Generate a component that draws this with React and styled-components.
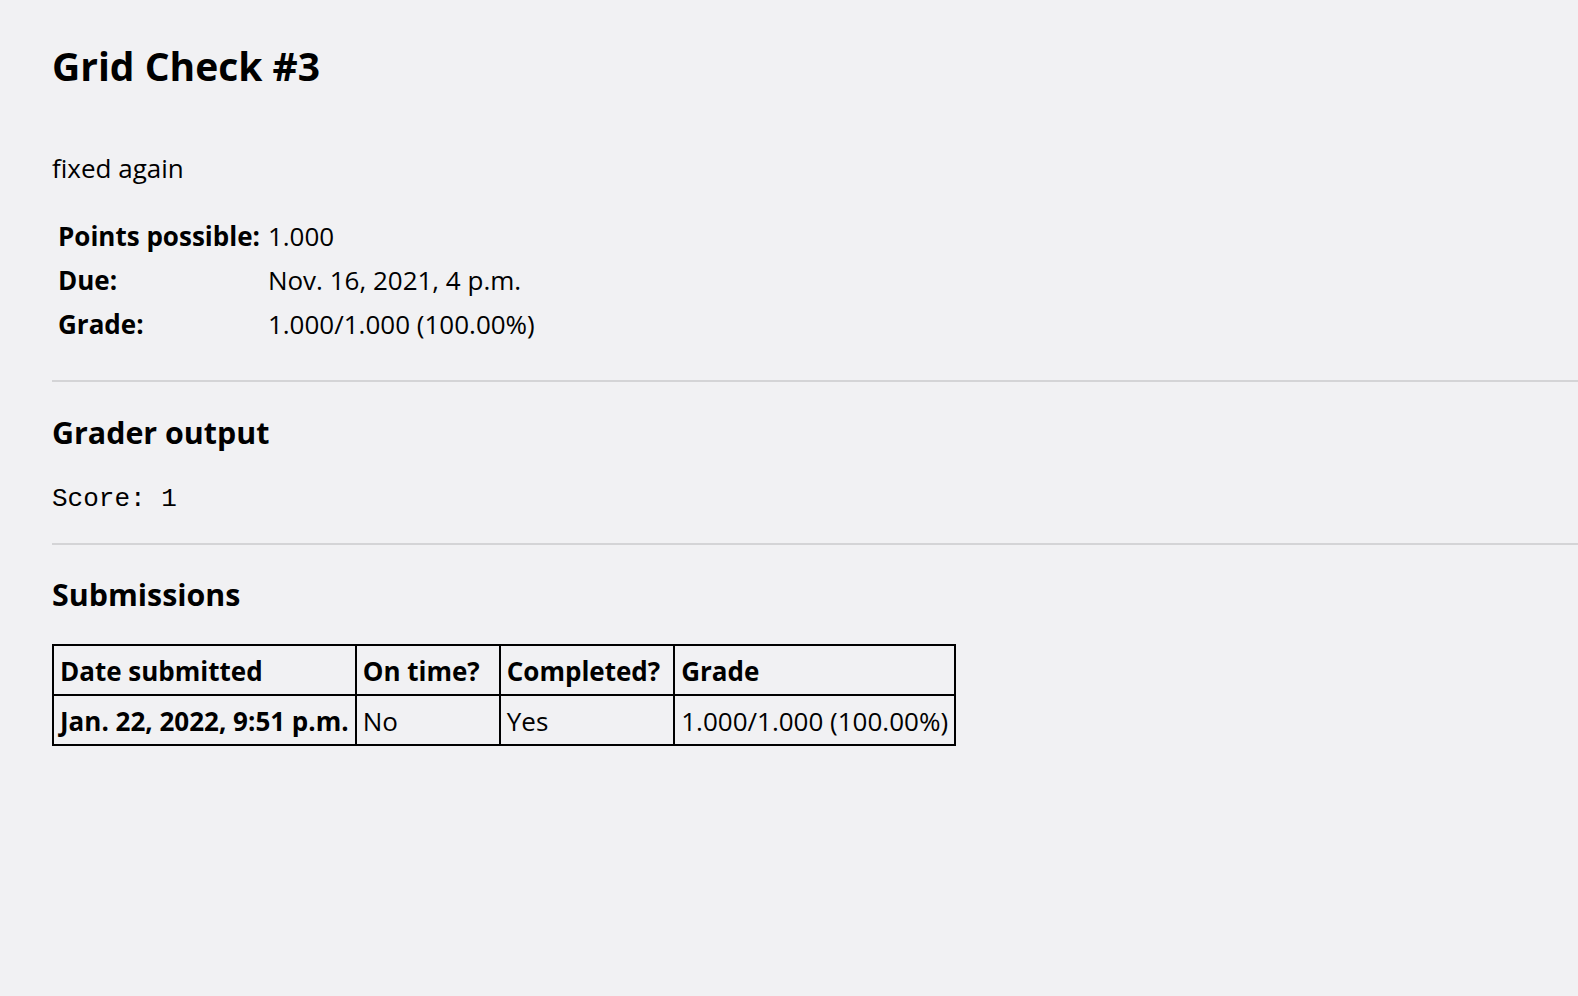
import React from "react";
import styled, { createGlobalStyle } from "styled-components";

const GlobalStyle = createGlobalStyle`
    html, body {
        margin: 0;
        padding: 0;
        background-color: #f1f1f3;
    }
    body {
        font-family: "Open Sans", "Noto Sans", sans-serif;
        color: #000;
        font-size: 26px;
    }
`;

const details = [
    { label: "Points possible:", value: "1.000" },
    { label: "Due:", value: "Nov. 16, 2021, 4 p.m." },
    { label: "Grade:", value: "1.000/1.000 (100.00%)" },
];

function App() {
    return (
        <>
            <GlobalStyle />
            <Page>
                <Title>Grid Check #3</Title>
                <Description>fixed again</Description>
                <InfoTable>
                    <tbody>
                        {details.map((row) => (
                            <tr key={row.label}>
                                <InfoLabel>{row.label}</InfoLabel>
                                <InfoValue>{row.value}</InfoValue>
                            </tr>
                        ))}
                    </tbody>
                </InfoTable>
                <Rule $top={34} />
                <SectionTitle $top={33} $bottom={33}>
                    Grader output
                </SectionTitle>
                <Output>Score: 1</Output>
                <Rule $top={29} />
                <SectionTitle $top={32} $bottom={30}>
                    Submissions
                </SectionTitle>
                <Submissions>
                    <thead>
                        <tr>
                            <HeadCell>Date submitted</HeadCell>
                            <HeadCell $extra={13}>On time?</HeadCell>
                            <HeadCell $extra={7}>Completed?</HeadCell>
                            <HeadCell>Grade</HeadCell>
                        </tr>
                    </thead>
                    <tbody>
                        <tr>
                            <HeadCell>Jan. 22, 2022, 9:51 p.m.</HeadCell>
                            <Cell>No</Cell>
                            <Cell>Yes</Cell>
                            <Cell>1.000/1.000 (100.00%)</Cell>
                        </tr>
                    </tbody>
                </Submissions>
            </Page>
        </>
    );
}

const Page = styled.div`
    padding: 43px 0 60px 52px;
`;
const Title = styled.h1`
    font-size: 39px;
    font-weight: 700;
    margin: 0 0 59px;
    line-height: 1.2;
`;
const Description = styled.p`
    margin: 0 0 26px;
    line-height: 1.5;
`;
const InfoTable = styled.table`
    border-spacing: 0;
`;
const InfoLabel = styled.th`
    text-align: left;
    font-weight: 700;
    padding: 4px 8px 4px 6px;
    line-height: 36px;
`;
const InfoValue = styled.td`
    padding: 4px 0;
    line-height: 36px;
`;
const Rule = styled.hr`
    border: none;
    border-top: 2px solid #d4d4d6;
    margin: ${(p) => p.$top}px 0 0;
`;
const SectionTitle = styled.h2`
    font-size: 30.4px;
    font-weight: 700;
    margin: ${(p) => p.$top}px 0 ${(p) => p.$bottom}px;
    line-height: 1.2;
`;
const Output = styled.pre`
    font-family: "Liberation Mono", "Courier New", monospace;
    font-size: 26px;
    line-height: 30px;
    margin: 0;
`;
const Submissions = styled.table`
    border-collapse: collapse;
    border: 2px solid #000;
`;
const HeadCell = styled.th`
    border: 2px solid #000;
    text-align: left;
    font-weight: 700;
    padding: 7px ${(p) => 6 + (p.$extra || 0)}px 5px 6px;
    line-height: 36px;
    white-space: nowrap;
`;
const Cell = styled.td`
    border: 2px solid #000;
    padding: 7px 6px 5px;
    line-height: 36px;
    white-space: nowrap;
`;

export default App;
